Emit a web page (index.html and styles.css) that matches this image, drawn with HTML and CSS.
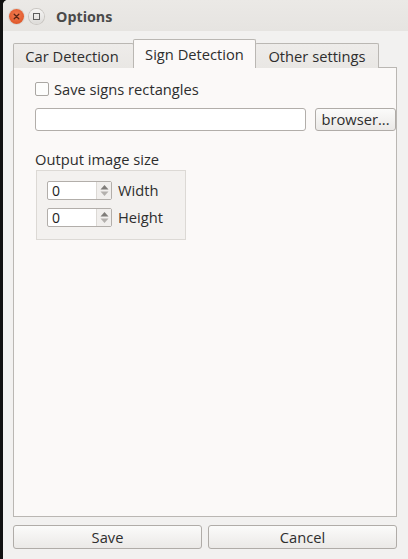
FILE: index.html
```html
<!DOCTYPE html>
<html>
<head>
<meta charset="utf-8">
<link rel="stylesheet" href="styles.css">
</head>
<body>
<div class="window">
  <div class="titlebar">
    <span class="wbtn close"><svg width="15" height="15" viewBox="0 0 15 15"><path d="M5.2 5.2 L9.8 9.8 M9.8 5.2 L5.2 9.8" stroke="#5a2412" stroke-width="1.3" stroke-linecap="round"/></svg></span>
    <span class="wbtn max"><svg width="15" height="15" viewBox="0 0 15 15"><rect x="4.5" y="4.5" width="6" height="6" fill="none" stroke="#5c5c5c" stroke-width="1"/></svg></span>
    <span class="title">Options</span>
  </div>
  <div class="content">
    <div class="tabs">
      <div class="tab tab-car">Car Detection</div>
      <div class="tab tab-sign active">Sign Detection</div>
      <div class="tab tab-other">Other settings</div>
    </div>
    <div class="pane">
      <label class="check-row"><span class="checkbox"></span><span>Save signs rectangles</span></label>
      <div class="path-row">
        <div class="text-input"></div>
        <div class="btn browse">browser...</div>
      </div>
      <div class="group-title">Output image size</div>
      <div class="group">
        <div class="spin-row">
          <div class="spinbox"><span class="spin-val">0</span><span class="spin-arrows"><svg width="13" height="17" viewBox="0 0 13 17"><path d="M2.5 7.5 L6.5 3 L10.5 7.5 Z" fill="#7f7c79"/><path d="M2.5 9.5 L6.5 14 L10.5 9.5 Z" fill="#b3b0ad"/></svg></span></div>
          <span class="spin-label">Width</span>
        </div>
        <div class="spin-row">
          <div class="spinbox"><span class="spin-val">0</span><span class="spin-arrows"><svg width="13" height="17" viewBox="0 0 13 17"><path d="M2.5 7.5 L6.5 3 L10.5 7.5 Z" fill="#7f7c79"/><path d="M2.5 9.5 L6.5 14 L10.5 9.5 Z" fill="#b3b0ad"/></svg></span></div>
          <span class="spin-label">Height</span>
        </div>
      </div>
    </div>
    <div class="buttons">
      <div class="btn big">Save</div>
      <div class="btn big">Cancel</div>
    </div>
  </div>
</div>
</body>
</html>
```
FILE: styles.css
```css
* { box-sizing: border-box; }
html, body { margin: 0; padding: 0; }
body {
  width: 408px;
  height: 559px;
  background: #111;
  font-family: "Open Sans", "DejaVu Sans", sans-serif;
  font-size: 14.7px;
  color: #2e2e2e;
  overflow: hidden;
}
.window {
  margin-left: 3px;
  height: 559px;
  background: #f2f1f0;
  display: flex;
  flex-direction: column;
  border-top-left-radius: 5px;
}
.titlebar {
  height: 31px;
  background: linear-gradient(#ebe9e6, #e6e4e1);
  display: flex;
  align-items: center;
  padding-left: 6px;
  border-top-left-radius: 5px;
  flex-shrink: 0;
}
.wbtn {
  width: 15px;
  height: 15px;
  border-radius: 50%;
  display: block;
  margin-top: 2px;
}
.wbtn svg { display: block; }
.close {
  background: radial-gradient(circle at 50% 40%, #f57d52, #e05a2c 70%, #c84a22);
  box-shadow: 0 0 0 1px #d9d6d2;
}
.max {
  margin-left: 5px;
  background: linear-gradient(#f6f5f4, #dddbd8);
  box-shadow: 0 0 0 1px #c9c6c2;
}
.title {
  margin-left: 12px;
  margin-top: 1px;
  font-weight: bold;
  font-size: 14.3px;
  color: #4a4a4a;
}
.content {
  flex: 1;
  display: flex;
  flex-direction: column;
  padding: 9px 11px 10px 10px;
}
.tabs {
  display: flex;
  align-items: flex-end;
  height: 28px;
  position: relative;
  z-index: 1;
  margin-bottom: -1px;
}
.tab {
  height: 25px;
  border: 1px solid #bab7b3;
  border-bottom: none;
  border-top-left-radius: 2px;
  border-top-right-radius: 2px;
  background: linear-gradient(#eeecea, #e9e7e4);
  text-align: center;
  line-height: 24px;
}
.tab-car { width: 121px; margin-right: -1px; padding-right: 3px; }
.tab-sign { width: 123px; }
.tab-other { width: 124px; margin-left: -1px; }
.tab.active {
  height: 29px;
  line-height: 28px;
  background: #fbf9f8;
  position: relative;
  z-index: 2;
}
.pane {
  flex: 1;
  border: 1px solid #bab7b3;
  background: #fbf9f8;
  padding: 14px 0 0 21px;
  display: flex;
  flex-direction: column;
  align-items: flex-start;
}
.check-row {
  display: flex;
  align-items: center;
  height: 14px;
}
.checkbox {
  width: 14px;
  height: 14px;
  border: 1px solid #aaa7a3;
  border-radius: 2px;
  background: #fdfdfc;
  margin-right: 5px;
}
.path-row {
  display: flex;
  width: 100%;
  margin-top: 12px;
  gap: 9px;
}
.text-input {
  width: 271px;
  height: 23px;
  border: 1px solid #b2aeaa;
  border-radius: 3px;
  background: #fff;
}
.btn {
  border: 1px solid #b0aca8;
  border-radius: 3px;
  background: linear-gradient(#fbfbfa, #ebe9e7);
  text-align: center;
}
.browse {
  flex: 1;
  height: 23px;
  line-height: 20px;
  padding: 0 4px;
}
.group-title {
  margin-top: 18px;
  line-height: 20px;
}
.group {
  margin-top: 1px;
  margin-left: 1px;
  width: 150px;
  height: 70px;
  border: 1px solid #dcd9d5;
  background: #f3f1ef;
  padding: 10px 0 0 10px;
  display: flex;
  flex-direction: column;
  gap: 8px;
}
.spin-row {
  display: flex;
  align-items: center;
  height: 19px;
}
.spinbox {
  width: 65px;
  height: 19px;
  border: 1px solid #b2aeaa;
  border-radius: 2px;
  background: #fff;
  display: flex;
  align-items: center;
  justify-content: space-between;
  font-size: 14px;
}
.spin-val { padding-left: 4px; color: #222; }
.spin-arrows {
  width: 15px;
  height: 17px;
  border-left: 1px solid #dcd9d5;
  background: #f1efed;
  display: flex;
  align-items: center;
  justify-content: center;
}
.spin-arrows svg { display: block; }
.spin-label {
  margin-left: 6px;
  margin-top: -2px;
}
.buttons {
  display: flex;
  gap: 6px;
  margin-top: 8px;
}
.big {
  flex: 1;
  height: 24px;
  line-height: 23px;
}
```
